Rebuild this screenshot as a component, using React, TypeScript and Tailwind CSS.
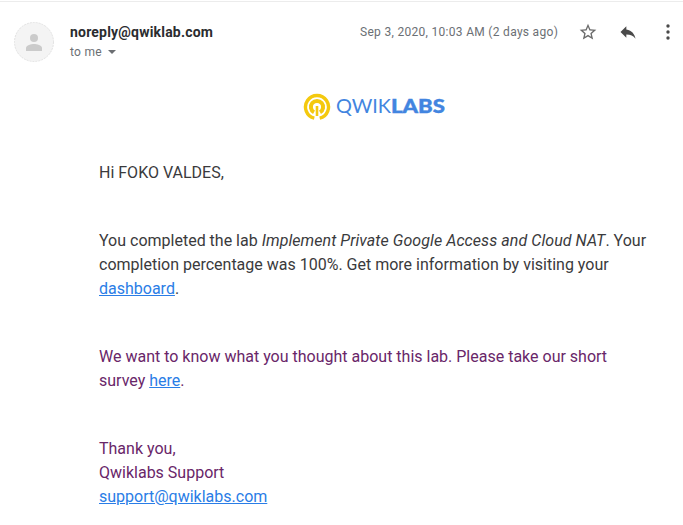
import type { ReactNode } from "react";

function Link({ children }: { children: ReactNode }) {
  return (
    <a href="#" className="text-[#2a7de6] underline">
      {children}
    </a>
  );
}

function Avatar() {
  return (
    <svg width="40" height="40" viewBox="0 0 40 40" className="shrink-0">
      <circle cx="20" cy="20" r="19.5" fill="#f4f4f4" stroke="#e2e2e2" strokeDasharray="2 1" />
      <circle cx="20" cy="16" r="4" fill="#cbcbcb" />
      <path d="M12 29v-3c0-2.700 5.300-4 8-4s8 1.300 8 4v3z" fill="#cbcbcb" />
    </svg>
  );
}

function Header() {
  return (
    <header className="flex border-t border-[#ececec] pt-5 pr-[5px] pl-3.5">
      <Avatar />
      <div className="ml-4 flex-1 whitespace-nowrap">
        <div className="h-5 text-sm leading-5 font-bold tracking-[0.2px] text-[#2b2c2f]">noreply@qwiklab.com</div>
        <div className="flex h-5 items-center text-xs leading-5 tracking-[0.3px] text-[#6b6f74]">
          to me
          <svg width="8" height="4" viewBox="0 0 8 4" className="ml-1.5">
            <path d="M0 0h8L4 4z" fill="#6b6e72" />
          </svg>
        </div>
      </div>
      <div className="flex h-5 items-center">
        <span className="w-[198px] text-xs leading-5 tracking-[0.3px] whitespace-nowrap text-[#6b6f74]">
          Sep 3, 2020, 10:03 AM (2 days ago)
        </span>
        <svg width="20" height="20" viewBox="0 0 24 24" className="ml-5" fill="#6b6b6b">
          <path d="M22 9.240l-7.190-.62L12 2 9.190 8.630 2 9.240l5.460 4.730L5.820 21 12 17.270 18.180 21l-1.630-7.030L22 9.240zM12 15.400l-3.760 2.270 1-4.280-3.320-2.880 4.380-.38L12 6.100l1.710 4.040 4.380.38-3.320 2.880 1 4.280L12 15.400z" />
        </svg>
        <svg width="20" height="20" viewBox="0 0 24 24" className="ml-5" fill="#4a4a4a">
          <path d="M10 9V5l-7 7 7 7v-4.100c5 0 8.500 1.600 11 5.100-1-5-4-10-11-11z" />
        </svg>
        <svg width="20" height="20" viewBox="0 0 20 20" className="ml-5 shrink-0" fill="#4a4a4a">
          <circle cx="10" cy="4" r="1.700" />
          <circle cx="10" cy="10" r="1.700" />
          <circle cx="10" cy="16" r="1.700" />
        </svg>
      </div>
    </header>
  );
}

function Logo() {
  return (
    <svg width="142" height="28" viewBox="0 0 142 28" className="ml-[303px]">
      <g fill="none" stroke="#f4c90e">
        <path d="M11.300 25.200A11.500 11.500 0 1 1 16.700 25.200" strokeWidth="3.400" />
        <path d="M11 19.300A6.100 6.100 0 1 1 17 19.300" strokeWidth="4" />
        <path d="M14 13v10" strokeWidth="2.600" />
      </g>
      <g fill="#4285e0" fontFamily="Lato, sans-serif" fontSize="18.500">
        <text x="33" y="20" textLength="55" lengthAdjust="spacingAndGlyphs" fontWeight="400">QWIK</text>
        <text x="88" y="20" textLength="54" lengthAdjust="spacingAndGlyphs" fontWeight="900" stroke="#4285e0" strokeWidth="0.400">LABS</text>
      </g>
    </svg>
  );
}

export default function App() {
  return (
    <div className="h-[525px] w-[683px] overflow-hidden bg-white pt-px font-['Roboto',sans-serif]">
      <Header />
      <main className="pt-[31px]">
        <Logo />
        <div className="mt-10 ml-[99px] flex flex-col gap-11 text-base leading-6 whitespace-nowrap text-[#3a3a3c]">
          <p>Hi FOKO VALDES,</p>
          <p>
            You completed the lab{" "}
            <em className="tracking-[0.07px]">Implement Private Google Access and Cloud NAT</em>. Your
            <br />
            completion percentage was 100%. Get more information by visiting your
            <br />
            <Link>dashboard</Link>.
          </p>
          <p className="text-[#692669]">
            We want to know what you thought about this lab. Please take our short
            <br />
            survey <Link>here</Link>.
          </p>
          <p className="text-[#692669]">
            Thank you,
            <br />
            Qwiklabs Support
            <br />
            <Link>support@qwiklabs.com</Link>
          </p>
        </div>
      </main>
    </div>
  );
}
